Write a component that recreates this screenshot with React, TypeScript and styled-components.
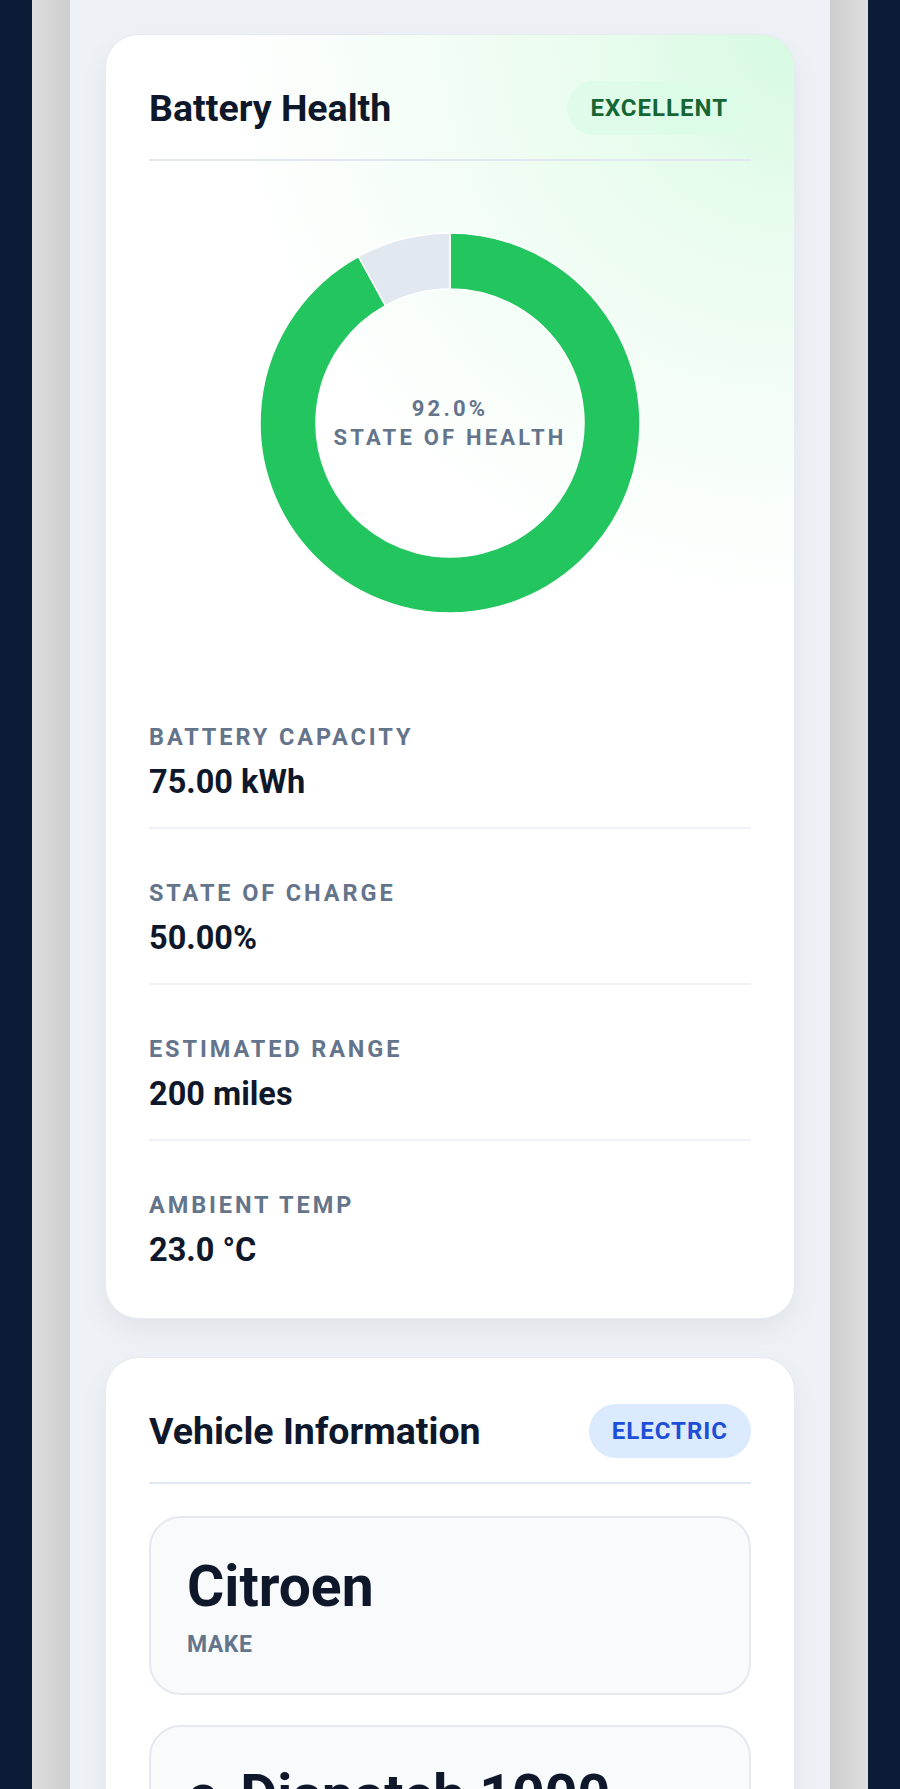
import React from "react";
import styled, { createGlobalStyle } from "styled-components";

const GlobalStyle = createGlobalStyle`
  html, body {
    margin: 0;
    padding: 0;
    background: #0c1b36;
  }
  body {
    font-family: Roboto, "Noto Sans", "Liberation Sans", sans-serif;
    -webkit-font-smoothing: antialiased;
  }
  * { box-sizing: border-box; }
`;

const Frame = styled.div`
  width: 836px;
  margin: 0 auto;
  min-height: 100vh;
  padding: 0 38px;
  background: linear-gradient(
    90deg,
    #dfdfdf 0,
    #cdcdcd 38px,
    #cdcdcd calc(100% - 38px),
    #dfdfdf 100%
  );
`;

const Screen = styled.main`
  min-height: 100vh;
  background: #eef2f6;
  padding: 34px 35px 60px;
  display: flex;
  flex-direction: column;
  gap: 38px;
`;

const Card = styled.section<{ $tint?: boolean }>`
  background: ${(p) =>
    p.$tint
      ? "radial-gradient(580px 580px at 100% 0%, rgba(214,250,225,1) 0%, rgba(226,251,233,0.75) 35%, rgba(255,255,255,0) 100%), #ffffff"
      : "#ffffff"};
  border: 1px solid #e6ebf1;
  border-radius: 34px;
  padding: 46px 43px 48px;
  box-shadow: 0 12px 30px rgba(15, 23, 42, 0.06);
`;

const Header = styled.header`
  display: flex;
  align-items: center;
  justify-content: space-between;
  padding-bottom: 24px;
  border-bottom: 2px solid #e2e8f0;
`;

const Title = styled.h2`
  margin: 0;
  font-size: 37.5px;
  line-height: 1.2;
  font-weight: 700;
  color: #0f172a;
`;

const Badge = styled.span<{ $tone: "green" | "blue" }>`
  display: inline-flex;
  align-items: center;
  padding: 13px 23px;
  border-radius: 999px;
  font-size: 24px;
  line-height: 28px;
  font-weight: 700;
  letter-spacing: 1px;
  background: ${(p) => (p.$tone === "green" ? "rgba(220,252,231,0.85)" : "#dbeafe")};
  color: ${(p) => (p.$tone === "green" ? "#166534" : "#1d4ed8")};
`;

const ChartArea = styled.div`
  display: flex;
  justify-content: center;
  padding: 71px 0 85px;
`;

const Donut = styled.div`
  position: relative;
  width: 382px;
  height: 382px;
`;

const DonutLabel = styled.div`
  position: absolute;
  inset: 0;
  display: flex;
  flex-direction: column;
  align-items: center;
  justify-content: center;
  color: #64748b;
  font-size: 22px;
  line-height: 29px;
  font-weight: 700;
  letter-spacing: 3.2px;
  text-align: center;
`;

const MetricList = styled.div`
  display: flex;
  flex-direction: column;
  gap: 26px;
`;

const Metric = styled.div`
  display: flex;
  flex-direction: column;
  gap: 13px;
  padding: 25px 0;
  border-bottom: 2px solid #eef2f6;

  &:last-child {
    border-bottom: none;
    padding-bottom: 0;
  }
`;

const MetricLabel = styled.span`
  font-size: 23.5px;
  line-height: 26px;
  font-weight: 700;
  letter-spacing: 2.9px;
  color: #64748b;
  text-transform: uppercase;
`;

const MetricValue = styled.span`
  font-size: 32.5px;
  line-height: 39px;
  font-weight: 700;
  color: #0f172a;
`;

const TileList = styled.div`
  display: flex;
  flex-direction: column;
  gap: 30px;
  margin-top: 32px;
`;

const Tile = styled.div`
  background: #f8fafc;
  border: 2px solid #e5e9ef;
  border-radius: 32px;
  padding: 35px 36px 35px;
  display: flex;
  flex-direction: column;
  gap: 12px;
`;

const TileValue = styled.span`
  font-size: 57px;
  line-height: 67px;
  font-weight: 700;
  color: #0f172a;
`;

const TileLabel = styled.span`
  font-size: 23px;
  line-height: 26px;
  font-weight: 700;
  letter-spacing: 0.5px;
  color: #64748b;
  text-transform: uppercase;
`;

function sector(cx: number, cy: number, R: number, r: number, a0: number, a1: number) {
  const rad = (d: number) => (d * Math.PI) / 180;
  const p = (rr: number, a: number) => [cx + rr * Math.cos(rad(a)), cy + rr * Math.sin(rad(a))];
  const large = a1 - a0 > 180 ? 1 : 0;
  const [x0, y0] = p(R, a0);
  const [x1, y1] = p(R, a1);
  const [x2, y2] = p(r, a1);
  const [x3, y3] = p(r, a0);
  return `M${x0} ${y0} A${R} ${R} 0 ${large} 1 ${x1} ${y1} L${x2} ${y2} A${r} ${r} 0 ${large} 0 ${x3} ${y3} Z`;
}

const HealthDonut: React.FC<{ value: number }> = ({ value }) => {
  const start = -90;
  const mid = start + (value / 100) * 360;
  const end = 270;
  return (
    <Donut>
      <svg width="382" height="382" viewBox="0 0 382 382">
        <path d={sector(191, 191, 190, 134, start, mid)} fill="#22c55e" stroke="#ffffff" strokeWidth="1.5" />
        <path d={sector(191, 191, 190, 134, mid, end)} fill="#e2e8f0" stroke="#ffffff" strokeWidth="1.5" />
      </svg>
      <DonutLabel>
        <span>{value.toFixed(1)}%</span>
        <span>STATE OF HEALTH</span>
      </DonutLabel>
    </Donut>
  );
};

const metrics = [
  { label: "Battery Capacity", value: "75.00 kWh" },
  { label: "State of Charge", value: "50.00%" },
  { label: "Estimated Range", value: "200 miles" },
  { label: "Ambient Temp", value: "23.0 °C" },
];

const vehicle = [
  { label: "Make", value: "Citroen" },
  { label: "Model", value: "e-Dispatch 1000" },
  { label: "Year", value: "2023" },
  { label: "Registration", value: "AB23 CDE" },
];

export default function App() {
  return (
    <>
      <GlobalStyle />
      <Frame>
        <Screen>
          <Card $tint>
            <Header>
              <Title>Battery Health</Title>
              <Badge $tone="green">EXCELLENT</Badge>
            </Header>
            <ChartArea>
              <HealthDonut value={92} />
            </ChartArea>
            <MetricList>
              {metrics.map((m) => (
                <Metric key={m.label}>
                  <MetricLabel>{m.label}</MetricLabel>
                  <MetricValue>{m.value}</MetricValue>
                </Metric>
              ))}
            </MetricList>
          </Card>
          <Card>
            <Header>
              <Title>Vehicle Information</Title>
              <Badge $tone="blue">ELECTRIC</Badge>
            </Header>
            <TileList>
              {vehicle.map((v) => (
                <Tile key={v.label}>
                  <TileValue>{v.value}</TileValue>
                  <TileLabel>{v.label}</TileLabel>
                </Tile>
              ))}
            </TileList>
          </Card>
        </Screen>
      </Frame>
    </>
  );
}
